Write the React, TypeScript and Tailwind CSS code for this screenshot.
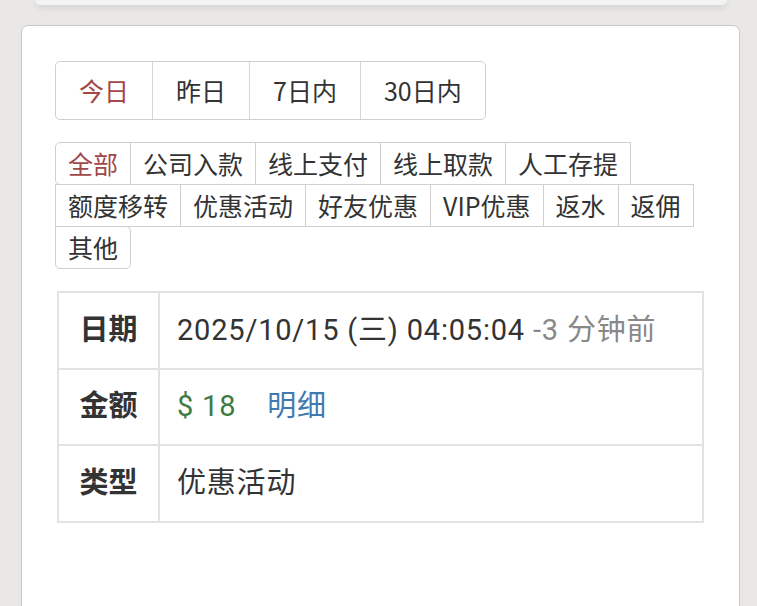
const font = { fontFamily: '"Noto Sans CJK SC", "Noto Sans", sans-serif' };
const tableFont = { fontFamily: 'Roboto, "Noto Sans CJK SC", sans-serif' };

const ranges = ["今日", "昨日", "7日内", "30日内"];
const kinds = [
  "全部",
  "公司入款",
  "线上支付",
  "线上取款",
  "人工存提",
  "额度移转",
  "优惠活动",
  "好友优惠",
  "VIP优惠",
  "返水",
  "返佣",
  "其他",
];

export default function App() {
  return (
    <div className="h-[606px] overflow-hidden bg-[#e9e8e7]" style={font}>
      {/* bottom of the previous card */}
      <div className="ml-[35px] mr-[30px] h-[5px] rounded-b-[6px] bg-[#f3f3f3] shadow-[0_2px_6px_rgba(0,0,0,0.12)]" />

      <div className="mt-[20px] ml-[21px] w-[719px] h-[640px] rounded-[7px] border border-[#c8c8c8] bg-white pt-[35px] px-[33px]">
        {/* date range tabs */}
        <div className="inline-flex rounded-[5px] border border-[#cfcfcf]">
          {ranges.map((r, i) => (
            <div
              key={r}
              className={`flex h-[57px] items-center px-[23px] text-[25px] leading-none ${
                i > 0 ? "border-l border-[#d6d6d6]" : ""
              } ${i === 0 ? "text-[#a0484a]" : "text-[#333]"}`}
            >
              {r}
            </div>
          ))}
        </div>

        {/* type filter */}
        <div className="mt-[22px] flex flex-wrap pl-px pt-px">
          {kinds.map((k, i) => (
            <div
              key={k}
              className={`-ml-px -mt-px flex h-[43px] items-center border border-[#cfcfcf] bg-white px-[12px] text-[25px] leading-none ${
                i === 0 ? "rounded-l-[5px] text-[#a0484a]" : "text-[#333]"
              } ${i === kinds.length - 1 ? "rounded-r-[5px] rounded-bl-[5px]" : ""}`}
            >
              {k}
            </div>
          ))}
        </div>

        {/* record table */}
        <table
          className="mt-[22px] ml-[2px] w-[647px] border-collapse text-[29px] tracking-[0.8px] text-[#333]"
          style={tableFont}
        >
          <tbody>
            <tr className="h-[77px]">
              <th className="w-[101px] border-2 border-[#e2e2e2] font-bold tracking-normal">日期</th>
              <td className="border-2 border-[#e2e2e2] pl-[17px]">
                2025/10/15 (三) 04:05:04 <span className="text-[#888]">-3 分钟前</span>
              </td>
            </tr>
            <tr className="h-[76px]">
              <th className="border-2 border-[#e2e2e2] font-bold tracking-normal">金额</th>
              <td className="border-2 border-[#e2e2e2] pl-[17px]">
                <span className="text-[#3f7a45]">$ 18</span>
                <span className="ml-[31px] text-[#3f7aae]">明细</span>
              </td>
            </tr>
            <tr className="h-[77px]">
              <th className="border-2 border-[#e2e2e2] font-bold tracking-normal">类型</th>
              <td className="border-2 border-[#e2e2e2] pl-[17px]">优惠活动</td>
            </tr>
          </tbody>
        </table>
      </div>
    </div>
  );
}
